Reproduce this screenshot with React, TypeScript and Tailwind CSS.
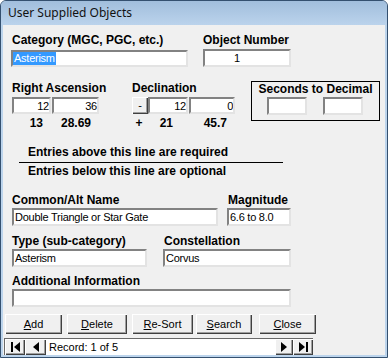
import type { ReactNode } from "react";

const sunken =
    "bg-white border-2 border-t-[#828282] border-l-[#828282] border-r-[#e3e3e3] border-b-[#e3e3e3] text-[11px] leading-[14px] tracking-[-0.25px] text-black overflow-hidden whitespace-nowrap";
const raised =
    "bg-[#f0f0f0] shadow-[inset_1px_1px_0_#ffffff,inset_-1px_-1px_0_#404040,inset_-2px_-2px_0_#a0a0a0]";
const label = "font-bold text-[12px] leading-[14px] text-black whitespace-nowrap";

function Field({ className, children }: { className: string; children?: ReactNode }) {
    return <div className={`${sunken} ${className}`}>{children}</div>;
}

function Button({ className, accel, rest }: { className: string; accel: string; rest: string }) {
    return (
        <div className={`${raised} ${className} h-[20px] flex items-center justify-center text-[11px] text-black`}>
            <span>
                <span className="underline underline-offset-1">{accel}</span>
                {rest}
            </span>
        </div>
    );
}

function NavGlyph({ dir, bar }: { dir: "left" | "right"; bar?: boolean }) {
    const w = bar ? 9 : 6;
    return (
        <svg width={w} height={10} viewBox={`0 0 ${w} 10`}>
            {dir === "left" ? (
                <>
                    {bar && <rect x="0" y="0" width="2" height="10" fill="#000" />}
                    <polygon points={`${w},0 ${w},10 ${w - 6},5`} fill="#000" />
                </>
            ) : (
                <>
                    <polygon points="0,0 0,10 6,5" fill="#000" />
                    {bar && <rect x="7" y="0" width="2" height="10" fill="#000" />}
                </>
            )}
        </svg>
    );
}

export default function App() {
    return (
        <div className="w-[388px] h-[358px] font-['Liberation_Sans',Arial,sans-serif]">
            <div className="flex flex-col w-[388px] h-[358px] border border-[#34506f] rounded-t-[6px] overflow-hidden bg-[#bcd4ec]">
                <div className="h-[24px] shrink-0 flex items-center pl-[7px] bg-linear-to-b from-[#a1bedc] to-[#bbd3ec] text-[12px] text-[#111] font-['Noto_Sans',sans-serif]">
                    User Supplied Objects
                </div>
                <div className="flex-1 mx-[2px] mb-[2px] bg-[#f0f0f0] overflow-hidden flex flex-col">
                    {/* category / object number */}
                    <div className={`flex mt-[8px] h-[14px] ${label}`}>
                        <div className="ml-[9px] w-[191px]">Category (MGC, PGC, etc.)</div>
                        <div>Object Number</div>
                    </div>
                    <div className="flex items-start mt-[2px] h-[18px]">
                        <Field className="ml-[8px] w-[177px] h-[17px] mt-[1px] flex items-center">
                            <span className="bg-[#3399ff] text-white px-[1px] leading-[13px]">Asterism</span>
                        </Field>
                        <Field className="ml-[15px] w-[88px] h-[18px] pl-[29px]">1</Field>
                    </div>

                    {/* coordinates */}
                    <div className="flex mt-[14px]">
                        <div className="ml-[9px] w-[239px] flex flex-col">
                            <div className={`flex h-[14px] ${label}`}>
                                <div className="w-[120px]">Right Ascension</div>
                                <div>Declination</div>
                            </div>
                            <div className="flex mt-[2px] h-[17px]">
                                <Field className="w-[39px] h-[17px] text-right">12</Field>
                                <Field className="ml-[1px] w-[47px] h-[17px] text-right">36</Field>
                                <div className={`${raised} ml-[33px] w-[16px] h-[17px] flex items-center justify-center text-[11px]`}>
                                    -
                                </div>
                                <Field className="w-[40px] h-[17px] text-right">12</Field>
                                <Field className="ml-[1px] w-[46px] h-[17px] text-right">0</Field>
                            </div>
                            <div className={`flex mt-[2px] h-[14px] ${label}`}>
                                <div className="w-[31px] text-right">13</div>
                                <div className="w-[48px] text-right">28.69</div>
                                <div className="ml-[41px] w-[14px] text-center">+</div>
                                <div className="w-[27px] text-right">21</div>
                                <div className="w-[54px] text-right">45.7</div>
                            </div>
                        </div>
                        <div className="w-[129px] h-[40px] border border-black flex flex-col">
                            <div className={`${label} h-[13px] leading-[13px] text-center`}>Seconds to Decimal</div>
                            <div className="flex mt-[2px]">
                                <Field className="ml-[15px] w-[40px] h-[18px]" />
                                <Field className="ml-[16px] w-[40px] h-[18px]" />
                            </div>
                        </div>
                    </div>

                    {/* required / optional divider */}
                    <div className={`mt-[15px] ml-[25px] h-[14px] ${label}`}>Entries above this line are required</div>
                    <div className="mt-[3px] ml-[16px] w-[264px] h-px bg-black" />
                    <div className={`mt-[1px] ml-[25px] h-[14px] ${label}`}>Entries below this line are optional</div>

                    {/* optional fields */}
                    <div className={`flex mt-[15px] h-[14px] ${label}`}>
                        <div className="ml-[9px] w-[216px]">Common/Alt Name</div>
                        <div>Magnitude</div>
                    </div>
                    <div className="flex mt-[1px] h-[18px]">
                        <Field className="ml-[9px] w-[206px] h-[18px] pl-[1px]">Double Triangle or Star Gate</Field>
                        <Field className="ml-[9px] w-[64px] h-[18px] pl-[1px]">6.6 to 8.0</Field>
                    </div>
                    <div className={`flex mt-[8px] h-[14px] ${label}`}>
                        <div className="ml-[9px] w-[152px]">Type (sub-category)</div>
                        <div>Constellation</div>
                    </div>
                    <div className="flex mt-[1px] h-[18px]">
                        <Field className="ml-[9px] w-[135px] h-[18px] pl-[1px]">Asterism</Field>
                        <Field className="ml-[16px] w-[128px] h-[18px] pl-[1px]">Corvus</Field>
                    </div>
                    <div className={`mt-[7px] ml-[9px] h-[14px] ${label}`}>Additional Information</div>
                    <Field className="mt-[1px] ml-[9px] w-[279px] h-[18px] shrink-0" />

                    {/* command buttons */}
                    <div className="flex mt-[7px] h-[20px]">
                        <Button className="ml-[2px] w-[57px]" accel="A" rest="dd" />
                        <Button className="ml-[5px] w-[60px]" accel="D" rest="elete" />
                        <Button className="ml-[5px] w-[61px]" accel="R" rest="e-Sort" />
                        <Button className="ml-[3px] w-[56px]" accel="S" rest="earch" />
                        <Button className="ml-[7px] w-[57px]" accel="C" rest="lose" />
                    </div>

                    {/* record navigator */}
                    <div className="flex mt-[4px] ml-[1px] w-[309px] h-[17px] shrink-0 border-t border-l border-[#696969]">
                        <div className={`${raised} w-[20px] h-full flex items-center justify-center`}>
                            <NavGlyph dir="left" bar />
                        </div>
                        <div className={`${raised} w-[21px] h-full flex items-center justify-center`}>
                            <NavGlyph dir="left" />
                        </div>
                        <div className="w-[229px] h-full bg-white pl-[3px] text-[11px] leading-[16px] text-black">
                            Record: 1 of 5
                        </div>
                        <div className={`${raised} w-[18px] h-full flex items-center justify-center`}>
                            <NavGlyph dir="right" />
                        </div>
                        <div className={`${raised} w-[20px] h-full flex items-center justify-center`}>
                            <NavGlyph dir="right" bar />
                        </div>
                    </div>
                </div>
            </div>
        </div>
    );
}
